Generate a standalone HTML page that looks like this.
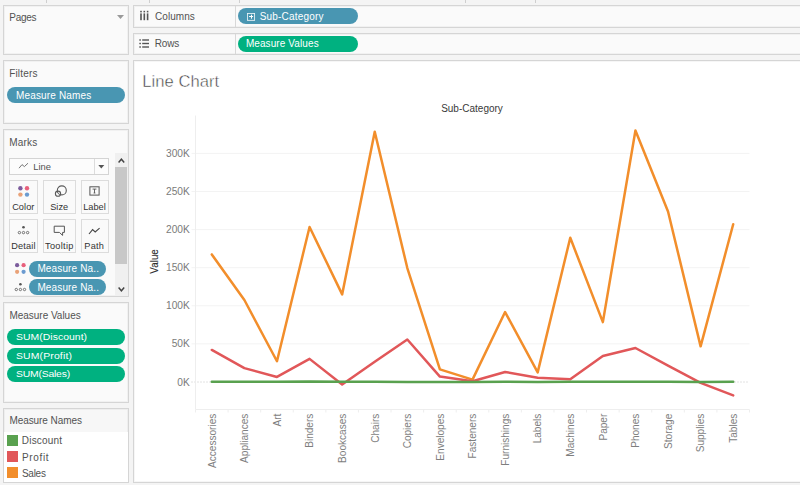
<!DOCTYPE html>
<html><head><meta charset="utf-8"><title>Line Chart</title>
<style>
*{box-sizing:border-box;margin:0;padding:0}
html,body{width:800px;height:485px;overflow:hidden;background:#f4f4f4;font-family:"Liberation Sans",sans-serif;}
.abs{position:absolute}
.panel{position:absolute;background:#fafafa;border:1px solid #d5d5d5;box-shadow:inset 0 0 0 1px rgba(0,0,0,0.035)}
.t{position:absolute;white-space:nowrap;font-size:10.5px;line-height:12px;color:#4a4a4a;letter-spacing:-0.2px}
.tx{position:absolute;white-space:nowrap;line-height:1.15;font-family:"Liberation Sans",sans-serif}
.pill{position:absolute;height:16px;border-radius:8px;color:#fff;font-size:10.5px;line-height:16px;white-space:nowrap;letter-spacing:-0.2px}
.blue{background:#4996b2}
.green{background:#00b180}
.tick{font-family:"Liberation Sans",sans-serif;font-size:10.2px;fill:#7a7a7a}
.xt{font-family:"Liberation Sans",sans-serif;font-size:11px;fill:#7e7e7e}
.axt{font-family:"Liberation Sans",sans-serif;font-size:10.5px;fill:#2e2e2e;stroke:#2e2e2e;stroke-width:0.12px}
.hdr{font-family:"Liberation Sans",sans-serif;font-size:10px;fill:#3a3a3a}
.btn{position:absolute;background:#fafafa;border:1px solid #dcdcdc;height:34px}
.bt{position:absolute;left:0;right:0;text-align:center;font-size:9.2px;line-height:10px;color:#333;top:22.5px;white-space:nowrap}
.vt{position:absolute;top:0;width:1px;height:3px;background:#cfcfcf}
</style></head><body>
<!-- top tab ticks -->
<div class="vt" style="left:46px"></div><div class="vt" style="left:149px"></div><div class="vt" style="left:239px"></div><div class="vt" style="left:465px"></div><div class="vt" style="left:535px"></div>

<!-- Pages -->
<div class="panel" style="left:3px;top:5px;width:126px;height:50px"></div>
<svg class="abs" style="left:117px;top:15px" width="7" height="4"><path d="M0 0H7L3.5 4Z" fill="#9a9a9a"/></svg>

<!-- Columns shelf -->
<div class="panel" style="left:133px;top:5px;width:680px;height:23px"></div>
<div class="abs" style="left:235px;top:6px;width:1px;height:21px;background:#d8d8d8"></div>
<svg class="abs" style="left:139px;top:10px" width="12" height="12" viewBox="0 0 12 12"><g fill="#555"><rect x="1.2" y="0.8" width="1.6" height="1.6"/><rect x="1.2" y="3.4" width="1.6" height="6.8"/><rect x="4.5" y="0.8" width="1.6" height="1.6"/><rect x="4.5" y="3.4" width="1.6" height="6.8"/><rect x="7.8" y="0.8" width="1.6" height="1.6"/><rect x="7.8" y="3.4" width="1.6" height="6.8"/></g></svg>
<div class="pill blue" style="left:238px;top:8px;width:120px"><svg class="abs" style="left:9px;top:5px" width="9" height="8" viewBox="0 0 9 8"><rect x="0.5" y="0.45" width="7.1" height="6.9" fill="none" stroke="#fff" stroke-opacity="0.9" stroke-width="0.85"/><path d="M2.1 3.5H6.1M4.5 1.7V5.7" stroke="#fff" stroke-width="1"/></svg></div>

<!-- Rows shelf -->
<div class="panel" style="left:133px;top:33px;width:680px;height:22px"></div>
<div class="abs" style="left:235px;top:34px;width:1px;height:20px;background:#d8d8d8"></div>
<svg class="abs" style="left:139px;top:38px" width="12" height="12" viewBox="0 0 12 12"><g fill="#555"><rect x="0.3" y="1.3" width="1.6" height="1.4"/><rect x="3.2" y="1.3" width="6.8" height="1.4"/><rect x="0.3" y="4.8" width="1.6" height="1.4"/><rect x="3.2" y="4.8" width="6.8" height="1.4"/><rect x="0.3" y="8.3" width="1.6" height="1.4"/><rect x="3.2" y="8.3" width="6.8" height="1.4"/></g></svg>
<div class="pill green" style="left:238px;top:36px;width:120px"></div>

<!-- Filters -->
<div class="panel" style="left:3px;top:60px;width:126px;height:64px"></div>
<div class="pill blue" style="left:7px;top:87px;width:118px"></div>

<!-- Marks -->
<div class="panel" style="left:3px;top:129px;width:126px;height:168px"></div>
<div class="abs" style="left:9px;top:158px;width:100px;height:17px;border:1px solid #d4d4d4;background:#fcfcfc"></div>
<div class="abs" style="left:94px;top:159px;width:1px;height:15px;background:#dcdcdc"></div>
<svg class="abs" style="left:98px;top:165px" width="7" height="4"><path d="M0.3 0H6.3L3.3 3.6Z" fill="#555"/></svg>
<svg class="abs" style="left:18px;top:162px" width="12" height="8" viewBox="0 0 12 8"><path d="M1 6.2L4 2.6L6.4 4.6L10 1.2" fill="none" stroke="#777" stroke-width="1"/></svg>
<!-- scrollbar -->
<div class="abs" style="left:115px;top:153px;width:13px;height:143px;background:#f0f0f0"></div>
<div class="abs" style="left:115px;top:167px;width:12px;height:97px;background:#c8c8c8"></div>
<svg class="abs" style="left:117px;top:157px" width="9" height="7" viewBox="0 0 9 7"><path d="M1.6 5.4L4.4 2.2L7.2 5.4" fill="none" stroke="#444" stroke-width="1.45"/></svg>
<svg class="abs" style="left:117px;top:286px" width="9" height="7" viewBox="0 0 9 7"><path d="M1.6 1.6L4.4 4.8L7.2 1.6" fill="none" stroke="#444" stroke-width="1.45"/></svg>
<!-- buttons row1 -->
<div class="btn" style="left:9px;top:180px;width:29px"><svg class="abs" style="left:7px;top:4px" width="13" height="13" viewBox="0 0 13 13"><circle cx="3.4" cy="3.2" r="2.2" fill="#7c5c9c"/><circle cx="10" cy="3.2" r="2.2" fill="#e8607c"/><circle cx="3.4" cy="9.6" r="2.2" fill="#e9a278"/><circle cx="10" cy="9.6" r="2.2" fill="#6b9bd0"/></svg></div>
<div class="btn" style="left:43px;top:180px;width:33px"><svg class="abs" style="left:9.5px;top:3px" width="14" height="14" viewBox="0 0 14 14"><circle cx="7.8" cy="6.4" r="4.5" fill="none" stroke="#5a5a5a" stroke-width="1.1"/><circle cx="4" cy="9.7" r="2.6" fill="none" stroke="#5a5a5a" stroke-width="1.1"/></svg></div>
<div class="btn" style="left:81px;top:180px;width:28px"><svg class="abs" style="left:7px;top:5px" width="13" height="12" viewBox="0 0 13 12"><rect x="0.9" y="0.8" width="9.2" height="8.3" fill="none" stroke="#555" stroke-width="1"/><path d="M3.6 3.1H7.4M5.5 3.1V7M4.6 7H6.4" stroke="#555" stroke-width="0.9" fill="none"/></svg></div>
<!-- buttons row2 -->
<div class="btn" style="left:9px;top:219px;width:29px"><svg class="abs" style="left:7px;top:4.3px" width="13" height="13" viewBox="0 0 13 13"><circle cx="6.5" cy="3.2" r="1.3" fill="#555"/><circle cx="2.4" cy="8.6" r="1.2" fill="none" stroke="#555" stroke-width="0.8"/><circle cx="6.5" cy="8.6" r="1.2" fill="none" stroke="#555" stroke-width="0.8"/><circle cx="10.6" cy="8.6" r="1.2" fill="none" stroke="#555" stroke-width="0.8"/></svg></div>
<div class="btn" style="left:43px;top:219px;width:33px"><svg class="abs" style="left:9.3px;top:4.5px" width="14" height="12" viewBox="0 0 14 12"><path d="M1.2 1.2H11.4V7.4H9.6V10.4L6.4 7.4H1.2Z" fill="none" stroke="#555" stroke-width="1" stroke-linejoin="round"/></svg></div>
<div class="btn" style="left:81px;top:219px;width:28px"><svg class="abs" style="left:6px;top:6.5px" width="13" height="9" viewBox="0 0 13 9"><path d="M1 7L4.6 2.6L7.2 5L11.6 1.2" fill="none" stroke="#444" stroke-width="1.1"/></svg></div>
<!-- marks pills -->
<svg class="abs" style="left:14px;top:262px" width="13" height="13" viewBox="0 0 13 13"><circle cx="3.1" cy="3.2" r="2.1" fill="#7c5c9c"/><circle cx="9.6" cy="3.2" r="2.1" fill="#e8607c"/><circle cx="3.1" cy="9.8" r="2.1" fill="#e9a278"/><circle cx="9.6" cy="9.8" r="2.1" fill="#6b9bd0"/></svg>
<div class="pill blue" style="left:29px;top:261px;width:77px"></div>
<svg class="abs" style="left:14px;top:281px" width="13" height="13" viewBox="0 0 13 13"><circle cx="6.4" cy="3.3" r="1.3" fill="#555"/><circle cx="2.3" cy="8.5" r="1.2" fill="none" stroke="#555" stroke-width="0.8"/><circle cx="6.4" cy="8.5" r="1.2" fill="none" stroke="#555" stroke-width="0.8"/><circle cx="10.5" cy="8.5" r="1.2" fill="none" stroke="#555" stroke-width="0.8"/></svg>
<div class="pill blue" style="left:29px;top:279px;width:77px"></div>

<!-- Measure Values -->
<div class="panel" style="left:3px;top:302px;width:126px;height:101px"></div>
<div class="pill green" style="left:7px;top:329px;width:118px;letter-spacing:0"></div>
<div class="pill green" style="left:7px;top:347.7px;width:118px;letter-spacing:0"></div>
<div class="pill green" style="left:7px;top:366.4px;width:118px;letter-spacing:0"></div>

<!-- Legend -->
<div class="panel" style="left:3px;top:408px;width:126px;height:75px;background:#f7f7f7"></div>
<div class="abs" style="left:4px;top:431.5px;width:124px;height:50.5px;background:#fff"></div>
<div class="abs" style="left:7px;top:435px;width:11px;height:11px;background:#59a14f"></div>
<div class="abs" style="left:7px;top:451px;width:11px;height:11px;background:#e15759"></div>
<div class="abs" style="left:7px;top:467.3px;width:11px;height:11px;background:#f28e2b"></div>

<!-- Main view -->
<div class="panel" style="left:133px;top:60px;width:680px;height:423px;background:#fff"></div>
<div id="pages" class="tx" style="left:9.19px;top:12.20px;font-size:10.00px;letter-spacing:-0.231px;color:#525252">Pages</div>
<div id="columns" class="tx" style="left:155.00px;top:11.20px;font-size:10.00px;letter-spacing:0.054px;color:#525252">Columns</div>
<div id="rows" class="tx" style="left:154.75px;top:37.70px;font-size:10.00px;letter-spacing:-0.178px;color:#525252">Rows</div>
<div id="filters" class="tx" style="left:9.19px;top:67.70px;font-size:10.00px;letter-spacing:0.161px;color:#525252">Filters</div>
<div id="marks" class="tx" style="left:9.28px;top:136.70px;font-size:10.00px;letter-spacing:0.183px;color:#525252">Marks</div>
<div id="mvt" class="tx" style="left:9.46px;top:309.70px;font-size:10.00px;letter-spacing:-0.023px;color:#525252">Measure Values</div>
<div id="mnt" class="tx" style="left:9.46px;top:415.20px;font-size:10.00px;letter-spacing:-0.078px;color:#525252">Measure Names</div>
<div id="discount" class="tx" style="left:21.87px;top:435.20px;font-size:10.00px;letter-spacing:0.168px;color:#525252">Discount</div>
<div id="profit" class="tx" style="left:21.89px;top:452.20px;font-size:10.00px;letter-spacing:0.683px;color:#525252">Profit</div>
<div id="sales" class="tx" style="left:21.90px;top:468.20px;font-size:10.00px;letter-spacing:-0.240px;color:#525252">Sales</div>
<div id="pmn" class="tx" style="left:16.03px;top:90.20px;font-size:10.00px;letter-spacing:0.149px;color:#fff">Measure Names</div>
<div id="psub" class="tx" style="left:259.76px;top:10.70px;font-size:10.00px;letter-spacing:0.185px;color:#fff">Sub-Category</div>
<div id="pmv" class="tx" style="left:245.89px;top:38.20px;font-size:10.00px;letter-spacing:0.096px;color:#fff">Measure Values</div>
<div id="pna1" class="tx" style="left:37.38px;top:263.20px;font-size:10.00px;letter-spacing:0.140px;color:#fff">Measure Na..</div>
<div id="pna2" class="tx" style="left:37.38px;top:281.70px;font-size:10.00px;letter-spacing:0.140px;color:#fff">Measure Na..</div>
<div id="sumd" class="tx" style="left:16.00px;top:331.10px;font-size:9.60px;letter-spacing:0.038px;color:#fff;transform-origin:0 50%;transform:scaleX(1.085)">SUM(Discount)</div>
<div id="sump" class="tx" style="left:16.00px;top:350.20px;font-size:9.60px;letter-spacing:0.142px;color:#fff;transform-origin:0 50%;transform:scaleX(1.085)">SUM(Profit)</div>
<div id="sums" class="tx" style="left:16.00px;top:368.30px;font-size:9.60px;letter-spacing:-0.200px;color:#fff;transform-origin:0 50%;transform:scaleX(1.085)">SUM(Sales)</div>
<div id="line" class="tx" style="left:33.16px;top:161.90px;font-size:9.40px;letter-spacing:0.043px;color:#525252">Line</div>
<div id="color" class="tx" style="left:12.18px;top:202.48px;font-size:9.20px;letter-spacing:0.058px;color:#333">Color</div>
<div id="size" class="tx" style="left:50.14px;top:202.48px;font-size:9.20px;letter-spacing:0.054px;color:#333">Size</div>
<div id="label" class="tx" style="left:83.19px;top:202.48px;font-size:9.20px;letter-spacing:0.029px;color:#333">Label</div>
<div id="detail" class="tx" style="left:11.14px;top:240.98px;font-size:9.20px;letter-spacing:0.200px;color:#333">Detail</div>
<div id="tooltip" class="tx" style="left:45.05px;top:240.98px;font-size:9.20px;letter-spacing:0.302px;color:#333">Tooltip</div>
<div id="path" class="tx" style="left:84.37px;top:240.98px;font-size:9.20px;letter-spacing:0.191px;color:#333">Path</div>
<div id="title" class="tx" style="left:142.14px;top:71.73px;font-size:16.60px;letter-spacing:0.055px;color:#3c3c3c;-webkit-text-stroke:0.45px #fff">Line Chart</div>
<svg class="chart" width="800" height="485" viewBox="0 0 800 485" style="position:absolute;left:0;top:0">
<line x1="191.5" y1="343.82" x2="749.5" y2="343.82" stroke="#f3f3f3" stroke-width="1"/>
<line x1="191.5" y1="305.74" x2="749.5" y2="305.74" stroke="#f3f3f3" stroke-width="1"/>
<line x1="191.5" y1="267.66" x2="749.5" y2="267.66" stroke="#f3f3f3" stroke-width="1"/>
<line x1="191.5" y1="229.58" x2="749.5" y2="229.58" stroke="#f3f3f3" stroke-width="1"/>
<line x1="191.5" y1="191.50" x2="749.5" y2="191.50" stroke="#f3f3f3" stroke-width="1"/>
<line x1="191.5" y1="153.42" x2="749.5" y2="153.42" stroke="#f3f3f3" stroke-width="1"/>
<line x1="191.5" y1="382.00" x2="749.5" y2="382.00" stroke="#c4c4c4" stroke-width="1" stroke-dasharray="1 2"/>
<line x1="195.5" y1="115.5" x2="195.5" y2="409.5" stroke="#eeeeee" stroke-width="1"/>
<line x1="195.5" y1="409.5" x2="749.5" y2="409.5" stroke="#eeeeee" stroke-width="1"/>
<line x1="195.50" y1="409.5" x2="195.50" y2="412.5" stroke="#eeeeee" stroke-width="1"/>
<line x1="228.09" y1="409.5" x2="228.09" y2="412.5" stroke="#eeeeee" stroke-width="1"/>
<line x1="260.68" y1="409.5" x2="260.68" y2="412.5" stroke="#eeeeee" stroke-width="1"/>
<line x1="293.26" y1="409.5" x2="293.26" y2="412.5" stroke="#eeeeee" stroke-width="1"/>
<line x1="325.85" y1="409.5" x2="325.85" y2="412.5" stroke="#eeeeee" stroke-width="1"/>
<line x1="358.44" y1="409.5" x2="358.44" y2="412.5" stroke="#eeeeee" stroke-width="1"/>
<line x1="391.03" y1="409.5" x2="391.03" y2="412.5" stroke="#eeeeee" stroke-width="1"/>
<line x1="423.62" y1="409.5" x2="423.62" y2="412.5" stroke="#eeeeee" stroke-width="1"/>
<line x1="456.21" y1="409.5" x2="456.21" y2="412.5" stroke="#eeeeee" stroke-width="1"/>
<line x1="488.79" y1="409.5" x2="488.79" y2="412.5" stroke="#eeeeee" stroke-width="1"/>
<line x1="521.38" y1="409.5" x2="521.38" y2="412.5" stroke="#eeeeee" stroke-width="1"/>
<line x1="553.97" y1="409.5" x2="553.97" y2="412.5" stroke="#eeeeee" stroke-width="1"/>
<line x1="586.56" y1="409.5" x2="586.56" y2="412.5" stroke="#eeeeee" stroke-width="1"/>
<line x1="619.15" y1="409.5" x2="619.15" y2="412.5" stroke="#eeeeee" stroke-width="1"/>
<line x1="651.74" y1="409.5" x2="651.74" y2="412.5" stroke="#eeeeee" stroke-width="1"/>
<line x1="684.32" y1="409.5" x2="684.32" y2="412.5" stroke="#eeeeee" stroke-width="1"/>
<line x1="716.91" y1="409.5" x2="716.91" y2="412.5" stroke="#eeeeee" stroke-width="1"/>
<line x1="749.50" y1="409.5" x2="749.50" y2="412.5" stroke="#eeeeee" stroke-width="1"/>
<path d="M211.79 254.42 L244.38 300.00 L276.97 361.25 L309.56 226.98 L342.15 294.41 L374.74 131.75 L407.32 268.02 L439.91 369.35 L472.50 379.60 L505.09 312.06 L537.68 372.39 L570.26 237.78 L602.85 322.13 L635.44 130.57 L668.03 211.42 L700.62 346.35 L733.21 224.27" fill="none" stroke="#f28e2b" stroke-width="2.5" stroke-linejoin="round" stroke-linecap="round"/>
<path d="M211.79 349.96 L244.38 368.09 L276.97 376.93 L309.56 358.88 L342.15 384.55 L374.74 361.65 L407.32 339.54 L439.91 376.60 L472.50 381.18 L505.09 371.95 L537.68 377.68 L570.26 379.32 L602.85 355.96 L635.44 348.00 L668.03 365.69 L700.62 382.81 L733.21 395.40" fill="none" stroke="#e15759" stroke-width="2.5" stroke-linejoin="round" stroke-linecap="round"/>
<path d="M211.79 381.85 L244.38 381.84 L276.97 381.85 L309.56 381.47 L342.15 381.86 L374.74 381.82 L407.32 381.89 L439.91 381.88 L472.50 381.89 L505.09 381.80 L537.68 381.88 L570.26 381.87 L602.85 381.82 L635.44 381.80 L668.03 381.85 L700.62 381.89 L733.21 381.84" fill="none" stroke="#59a14f" stroke-width="2.5" stroke-linejoin="round" stroke-linecap="round"/>
<text x="189.8" y="385.50" text-anchor="end" class="tick">0K</text>
<text x="189.8" y="347.42" text-anchor="end" class="tick">50K</text>
<text x="189.8" y="309.34" text-anchor="end" class="tick">100K</text>
<text x="189.8" y="271.26" text-anchor="end" class="tick">150K</text>
<text x="189.8" y="233.18" text-anchor="end" class="tick">200K</text>
<text x="189.8" y="195.10" text-anchor="end" class="tick">250K</text>
<text x="189.8" y="157.02" text-anchor="end" class="tick">300K</text>
<text transform="translate(215.59 413.7) rotate(-90) scale(0.915 1)" text-anchor="end" class="xt">Accessories</text>
<text transform="translate(248.18 413.7) rotate(-90) scale(0.915 1)" text-anchor="end" class="xt">Appliances</text>
<text transform="translate(280.77 413.7) rotate(-90) scale(0.915 1)" text-anchor="end" class="xt">Art</text>
<text transform="translate(313.36 413.7) rotate(-90) scale(0.915 1)" text-anchor="end" class="xt">Binders</text>
<text transform="translate(345.95 413.7) rotate(-90) scale(0.915 1)" text-anchor="end" class="xt">Bookcases</text>
<text transform="translate(378.54 413.7) rotate(-90) scale(0.915 1)" text-anchor="end" class="xt">Chairs</text>
<text transform="translate(411.12 413.7) rotate(-90) scale(0.915 1)" text-anchor="end" class="xt">Copiers</text>
<text transform="translate(443.71 413.7) rotate(-90) scale(0.915 1)" text-anchor="end" class="xt">Envelopes</text>
<text transform="translate(476.30 413.7) rotate(-90) scale(0.915 1)" text-anchor="end" class="xt">Fasteners</text>
<text transform="translate(508.89 413.7) rotate(-90) scale(0.915 1)" text-anchor="end" class="xt">Furnishings</text>
<text transform="translate(541.48 413.7) rotate(-90) scale(0.915 1)" text-anchor="end" class="xt">Labels</text>
<text transform="translate(574.06 413.7) rotate(-90) scale(0.915 1)" text-anchor="end" class="xt">Machines</text>
<text transform="translate(606.65 413.7) rotate(-90) scale(0.915 1)" text-anchor="end" class="xt">Paper</text>
<text transform="translate(639.24 413.7) rotate(-90) scale(0.915 1)" text-anchor="end" class="xt">Phones</text>
<text transform="translate(671.83 413.7) rotate(-90) scale(0.915 1)" text-anchor="end" class="xt">Storage</text>
<text transform="translate(704.42 413.7) rotate(-90) scale(0.915 1)" text-anchor="end" class="xt">Supplies</text>
<text transform="translate(737.01 413.7) rotate(-90) scale(0.915 1)" text-anchor="end" class="xt">Tables</text>
<text transform="translate(158.1 261.4) rotate(-90) scale(0.94 1)" text-anchor="middle" class="axt">Value</text>
<text x="472" y="112" text-anchor="middle" class="hdr">Sub-Category</text>
</svg>
</body></html>
